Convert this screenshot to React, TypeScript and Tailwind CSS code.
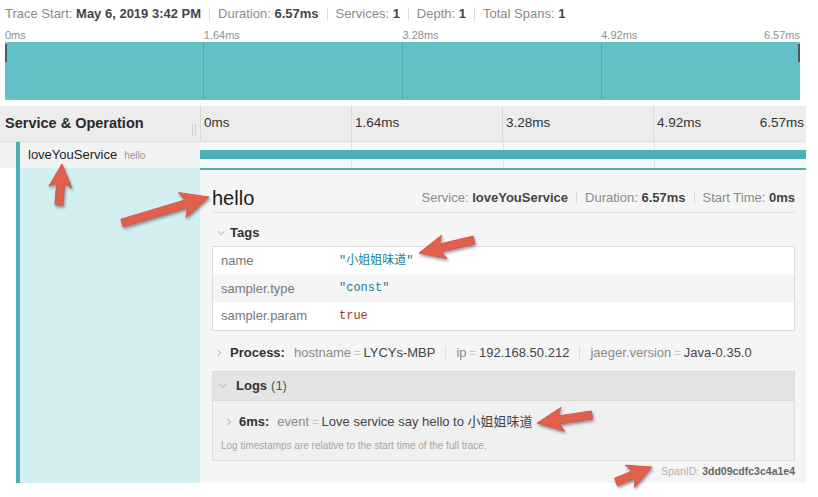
import { ChevronDown, ChevronRight } from "lucide-react";

const FONT = "font-['Liberation_Sans','Noto_Sans_CJK_SC',Arial,sans-serif]";

const Sep = ({ wide }: { wide?: boolean }) => (
  <span className={`${wide ? "mx-[10px]" : "mx-[8px]"} h-[13px] border-l border-[#dcdcdc]`} />
);

const TraceHeader = () => (
  <div className="flex h-[28px] items-center pl-[5px] text-[13px] text-[#8a8a8a]">
    <span>
      Trace Start: <b className="text-[#444]">May 6, 2019 3:42 PM</b>
    </span>
    <Sep />
    <span>
      Duration: <b className="text-[#444]">6.57ms</b>
    </span>
    <Sep />
    <span>
      Services: <b className="text-[#444]">1</b>
    </span>
    <Sep />
    <span>
      Depth: <b className="text-[#444]">1</b>
    </span>
    <Sep />
    <span>
      Total Spans: <b className="text-[#444]">1</b>
    </span>
  </div>
);

const Minimap = () => (
  <div className="pl-[5px] pr-[6px]">
    <div className="flex h-[14px] text-[11px] leading-[14px] text-[#8f8f8f]">
      <div className="flex-1">0ms</div>
      <div className="flex-1">1.64ms</div>
      <div className="flex-1">3.28ms</div>
      <div className="flex flex-1 justify-between">
        <span>4.92ms</span>
        <span>6.57ms</span>
      </div>
    </div>
    <div className="relative flex h-[58px] border-b border-[#8fb7ba] bg-[#63c0c6]">
      <div className="flex-1" />
      <div className="flex-1 border-l border-[#55a8ae]" />
      <div className="flex-1 border-l border-[#55a8ae]" />
      <div className="flex-1 border-l border-[#55a8ae]" />
      <div className="absolute top-[2px] left-0 h-[18px] w-[2px] bg-[#4d5a5c]" />
      <div className="absolute top-[2px] right-0 h-[18px] w-[2px] bg-[#4d5a5c]" />
    </div>
  </div>
);

const TimelineHeader = () => (
  <div className="flex h-[36px] border-b border-[#dedede] bg-[#ececec] text-[13.5px] text-[#333]">
    <div className="relative flex w-[200px] items-center pl-[5px]">
      <span className="text-[14.5px] font-semibold text-[#2a2a2a]">Service &amp; Operation</span>
      <div className="absolute top-[18px] right-[4px] flex h-[12px] gap-[2px]">
        <span className="border-l border-[#cfcfcf]" />
        <span className="border-l border-[#cfcfcf]" />
      </div>
    </div>
    <div className="flex flex-1">
      <div className="flex flex-1 items-center border-l border-[#d8d8d8] pl-[3px]">0ms</div>
      <div className="flex flex-1 items-center border-l border-[#d8d8d8] pl-[3px]">1.64ms</div>
      <div className="flex flex-1 items-center border-l border-[#d8d8d8] pl-[3px]">3.28ms</div>
      <div className="flex flex-1 items-center justify-between border-l border-[#d8d8d8] pr-[2px] pl-[3px]">
        <span>4.92ms</span>
        <span>6.57ms</span>
      </div>
    </div>
  </div>
);

const SpanRow = () => (
  <div className="flex h-[26px]">
    <div className="flex w-[200px] bg-[#f2f2f2] pl-[16px]">
      <div className="flex flex-1 items-center border-l-4 border-[#4eaeb6] pl-[8px]">
        <span className="text-[13px] text-[#1e1e1e]">loveYouService</span>
        <span className="ml-[7px] text-[10px] text-[#999]">hello</span>
      </div>
    </div>
    <div className="relative flex flex-1 bg-[#f4f9fa]">
      <div className="flex-1" />
      <div className="flex-1 border-l border-[#e2e2e2]" />
      <div className="flex-1 border-l border-[#e2e2e2]" />
      <div className="flex-1 border-l border-[#e2e2e2]" />
      <div className="absolute top-[8px] right-0 left-0 h-[9px] bg-[#4cafb7]" />
    </div>
  </div>
);

const KV = ({ k, v }: { k: string; v: string }) => (
  <span>
    <span className="text-[#8a8a8a]">{k}</span>
    <span className="mx-[3px] text-[11px] text-[#c4c4c4]">=</span>
    <span className="text-[#444]">{v}</span>
  </span>
);

const tags = [
  { key: "name", value: '"小姐姐味道"', color: "text-[#237f90]" },
  { key: "sampler.type", value: '"const"', color: "text-[#237f90]" },
  { key: "sampler.param", value: "true", color: "text-[#ad3328]" },
];

const SpanDetail = () => (
  <div className="flex h-[315px]">
    <div className="flex w-[200px] pl-[16px]">
      <div className="flex-1 border-l-4 border-r border-[#4eaeb6] border-r-[#dcecee] bg-[#d3eff2]" />
    </div>
    <div className="flex-1 border-t-2 border-[#4eaeb6] bg-[#f5f5f5] pt-[13px] pr-[11px] pl-[12px]">
      <div className="flex h-[30px] items-center justify-between border-b border-[#e0e0e0]">
        <span className="text-[20px] text-[#1c1c1c]">hello</span>
        <div className="flex items-center text-[13px] text-[#8a8a8a]">
          <span>
            Service: <b className="text-[#444]">loveYouService</b>
          </span>
          <Sep />
          <span>
            Duration: <b className="text-[#444]">6.57ms</b>
          </span>
          <Sep />
          <span>
            Start Time: <b className="text-[#444]">0ms</b>
          </span>
        </div>
      </div>

      <div className="mt-[10px] flex h-[20px] items-center text-[13px]">
        <ChevronDown size={12} strokeWidth={1.4} className="ml-[3px] text-[#888]" />
        <b className="ml-[3px] text-[#333]">Tags</b>
      </div>

      <div className="mt-[3px] border border-[#dcdcdc] bg-white">
        {tags.map((t, i) => (
          <div key={t.key} className={`flex h-[27.5px] items-center ${i === 1 ? "bg-[#f5f5f5]" : ""}`}>
            <span className="w-[126px] pl-[8px] text-[13px] text-[#777]">{t.key}</span>
            <span className={`font-['Liberation_Mono','Noto_Sans_CJK_SC',monospace] text-[12px] ${t.color}`}>
              {t.value}
            </span>
          </div>
        ))}
      </div>

      <div className="mt-[12px] flex h-[20px] items-center text-[13px]">
        <ChevronRight size={12} strokeWidth={1.4} className="ml-[1px] text-[#888]" />
        <b className="ml-[5px] text-[#333]">Process:</b>
        <span className="ml-[9px]">
          <KV k="hostname" v="LYCYs-MBP" />
        </span>
        <Sep wide />
        <KV k="ip" v="192.168.50.212" />
        <Sep wide />
        <KV k="jaeger.version" v="Java-0.35.0" />
      </div>

      <div className="mt-[8px] border border-[#dcdcdc]">
        <div className="flex h-[29px] items-center border-b border-[#dcdcdc] bg-[#e4e4e4] text-[13px]">
          <ChevronDown size={12} strokeWidth={1.4} className="ml-[4px] text-[#888]" />
          <b className="ml-[7px] text-[#333]">Logs</b>
          <span className="ml-[4px] text-[#555]">(1)</span>
        </div>
        <div className="bg-[#f0f0f0] pt-[11px] pb-[7px]">
          <div className="flex h-[20px] items-center text-[13px]">
            <ChevronRight size={12} strokeWidth={1.4} className="ml-[10px] text-[#888]" />
            <b className="ml-[4px] text-[#333]">6ms:</b>
            <span className="ml-[8px]">
              <KV k="event" v="Love service say hello to 小姐姐味道" />
            </span>
          </div>
          <div className="mt-[7px] h-[14px] pl-[8px] text-[10px] leading-[14px] text-[#a5a5a5]">
            Log timestamps are relative to the start time of the full trace.
          </div>
        </div>
      </div>

      <div className="mt-[4px] flex h-[14px] items-center justify-end text-[10.5px]">
        <span className="text-[#b0b0b0]">SpanID:</span>
        <span className="ml-[3px] font-semibold text-[#666]">3dd09cdfc3c4a1e4</span>
      </div>
    </div>
  </div>
);

type Arrow = { x1: number; y1: number; x2: number; y2: number; hw?: number; hl?: number };

const arrows: Arrow[] = [
  { x1: 59, y1: 205, x2: 62, y2: 164, hw: 11.5, hl: 19 },
  { x1: 122, y1: 223, x2: 209, y2: 197, hw: 13, hl: 24 },
  { x1: 474, y1: 240, x2: 419, y2: 253, hw: 12, hl: 22 },
  { x1: 592, y1: 415, x2: 537, y2: 423, hw: 12, hl: 22 },
  { x1: 616, y1: 482, x2: 652, y2: 467, hw: 12, hl: 20 },
];

const arrowPoints = ({ x1, y1, x2, y2, hw = 12, hl = 20 }: Arrow) => {
  const sw = 4;
  const dx = x2 - x1;
  const dy = y2 - y1;
  const len = Math.hypot(dx, dy);
  const ux = dx / len;
  const uy = dy / len;
  const nx = -uy;
  const ny = ux;
  const bx = x2 - ux * hl;
  const by = y2 - uy * hl;
  // swept-back head, like a hand-drawn callout arrow
  const sx = bx - ux * 4;
  const sy = by - uy * 4;
  const pts = [
    [x1 + nx * sw, y1 + ny * sw],
    [bx + nx * sw, by + ny * sw],
    [sx + nx * hw, sy + ny * hw],
    [x2, y2],
    [sx - nx * hw, sy - ny * hw],
    [bx - nx * sw, by - ny * sw],
    [x1 - nx * sw, y1 - ny * sw],
  ];
  return pts.map((p) => p.map((n) => n.toFixed(1)).join(",")).join(" ");
};

const Arrows = () => (
  <svg
    className="pointer-events-none absolute inset-0 drop-shadow-[1px_2px_1.5px_rgba(0,0,0,0.4)]"
    width="818"
    height="497"
  >
    {arrows.map((a, i) => (
      <polygon key={i} points={arrowPoints(a)} fill="#e0604d" strokeLinejoin="round" stroke="#d9584a" strokeWidth="1" />
    ))}
  </svg>
);

export default function App() {
  return (
    <div className={`relative h-[497px] w-[818px] overflow-hidden bg-white ${FONT}`}>
      <div className="w-[806px]">
        <TraceHeader />
        <Minimap />
        <div className="h-[6px]" />
        <TimelineHeader />
        <SpanRow />
        <SpanDetail />
      </div>
      <Arrows />
    </div>
  );
}
